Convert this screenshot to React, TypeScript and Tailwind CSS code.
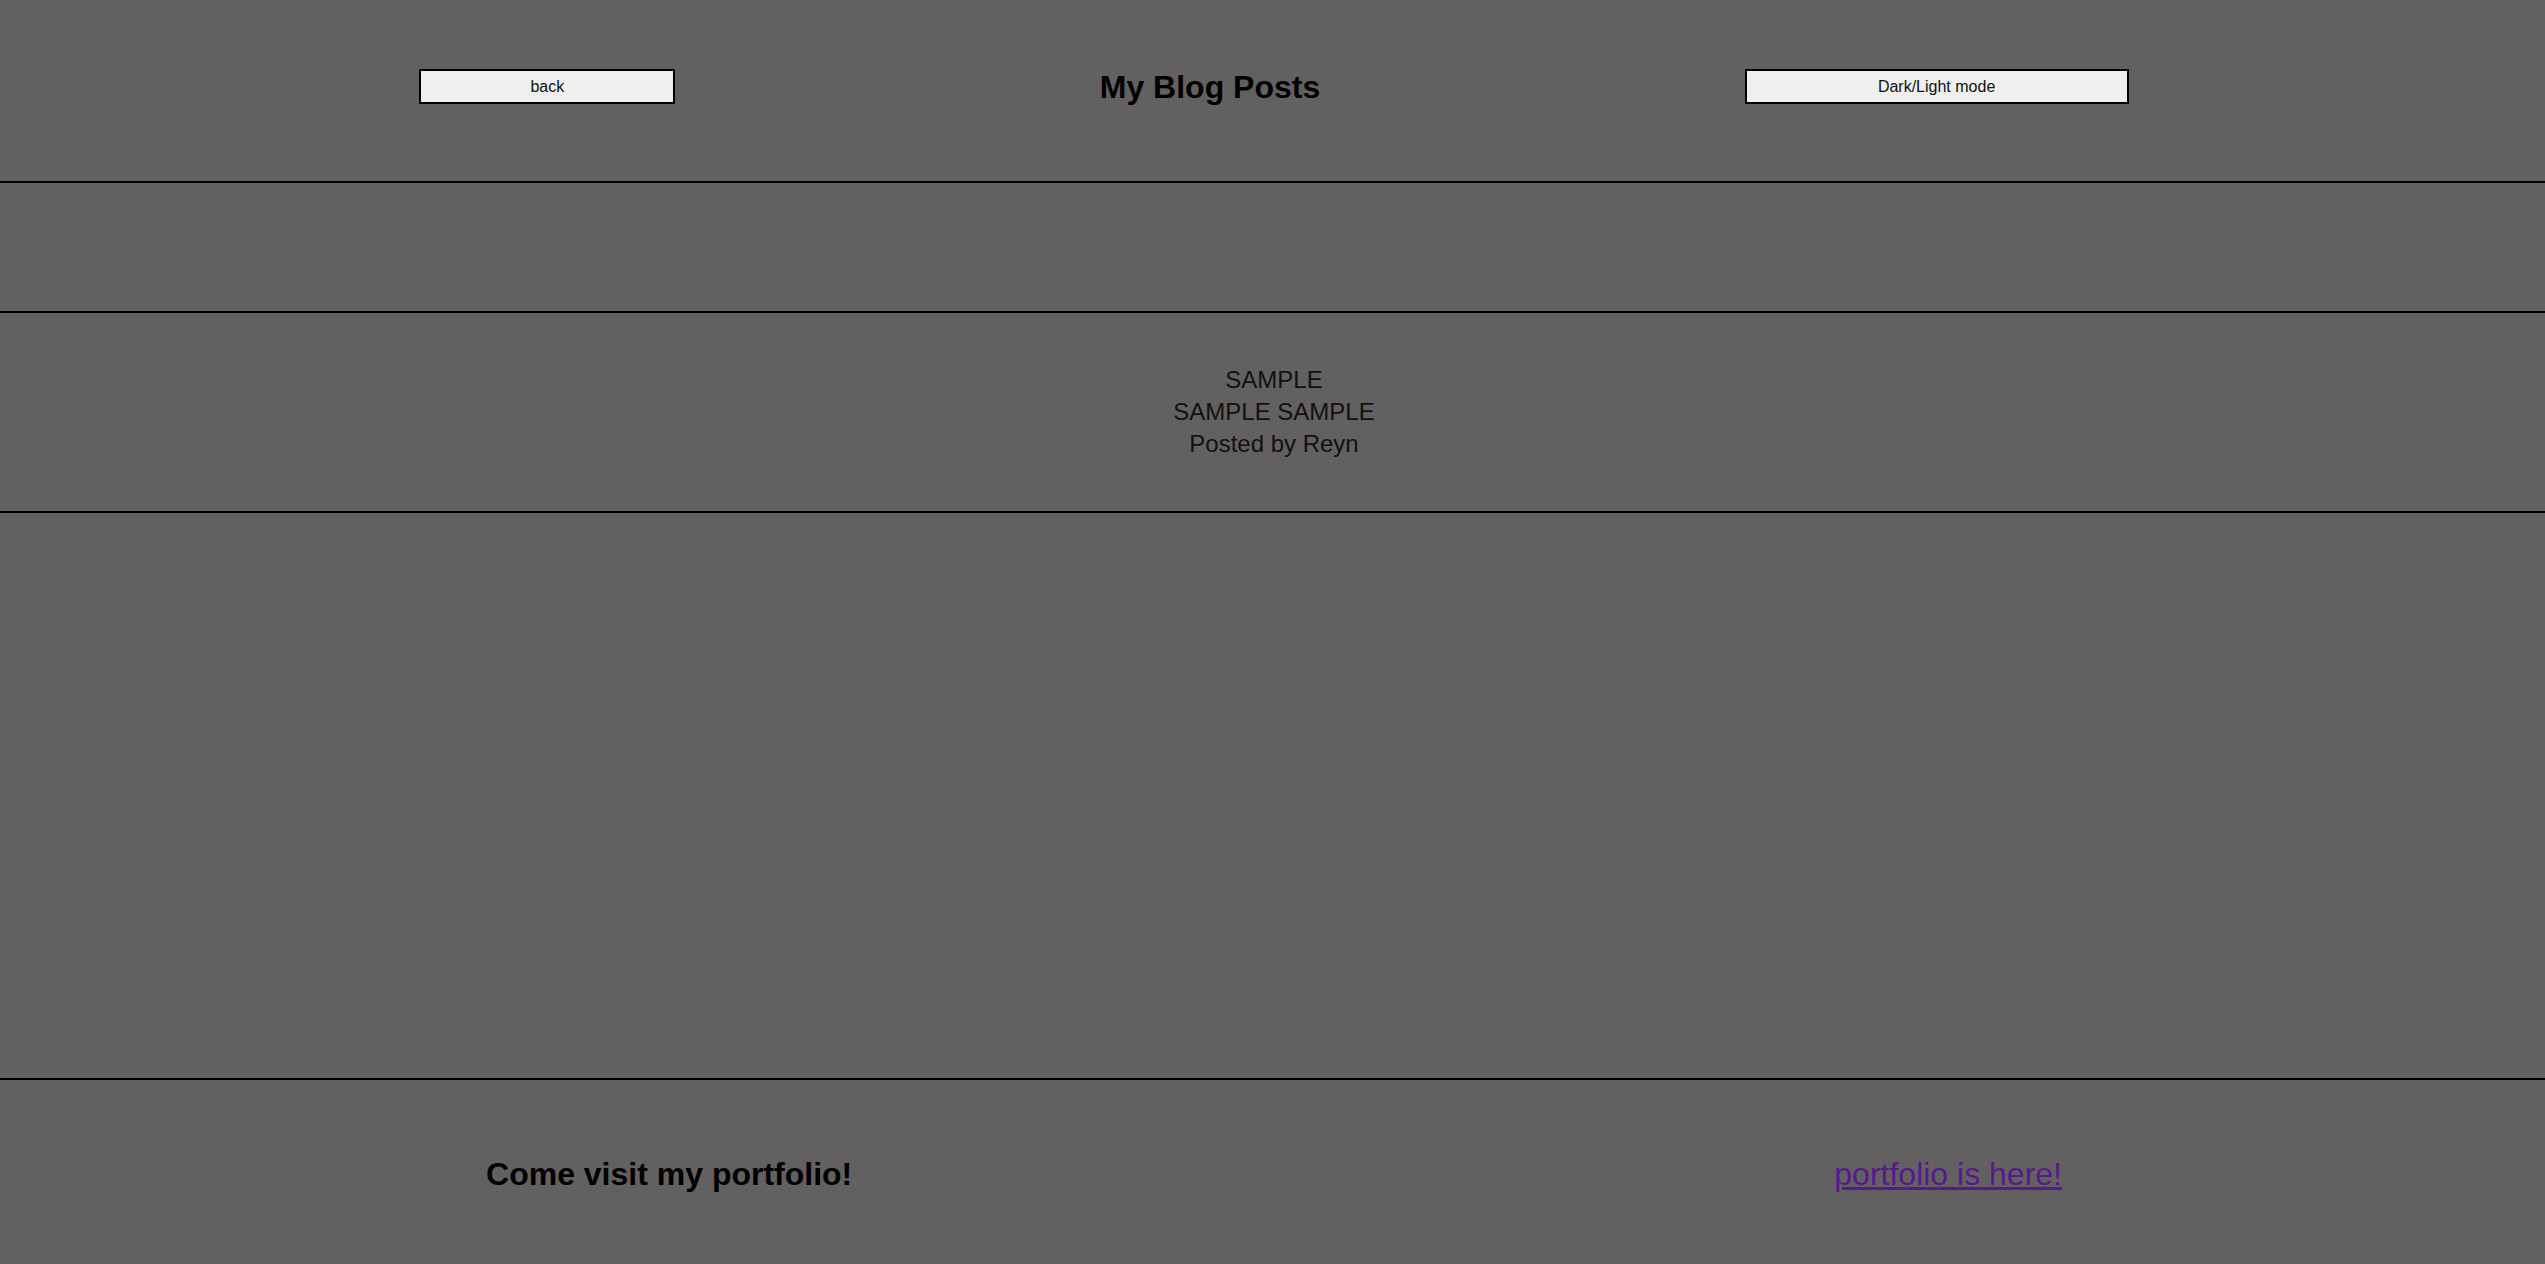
export default function App() {
  return (
    <div className="min-h-screen overflow-x-hidden bg-[#626061] font-['Liberation_Sans',Arial,sans-serif] text-black">
      <div className="-ml-[5px] -mr-[8px]">
        <header className="flex h-[183px] items-center justify-evenly border-b-2 border-black pb-[8px]">
          <button className="h-[35px] w-[256px] border-2 border-black bg-[#efefef] text-[16px] text-[#111]">
            back
          </button>
          <h1 className="text-[32px] font-bold">My Blog Posts</h1>
          <button className="h-[35px] w-[384px] border-2 border-black bg-[#efefef] text-[16px] text-[#111]">
            Dark/Light mode
          </button>
        </header>

        <section className="h-[130px] border-b-2 border-black" />

        <section className="flex h-[200px] flex-col items-center justify-center border-b-2 border-black text-[24px] leading-[32px] text-[#111]">
          <p>SAMPLE</p>
          <p>SAMPLE SAMPLE</p>
          <p>Posted by Reyn</p>
        </section>

        <section className="h-[567px] border-b-2 border-black" />

        <footer className="flex h-[188px] items-center justify-around">
          <h2 className="text-[32px] font-bold">Come visit my portfolio!</h2>
          <a href="#" className="text-[32px] text-[#551a8b] underline">
            portfolio is here!
          </a>
        </footer>
      </div>
    </div>
  );
}
